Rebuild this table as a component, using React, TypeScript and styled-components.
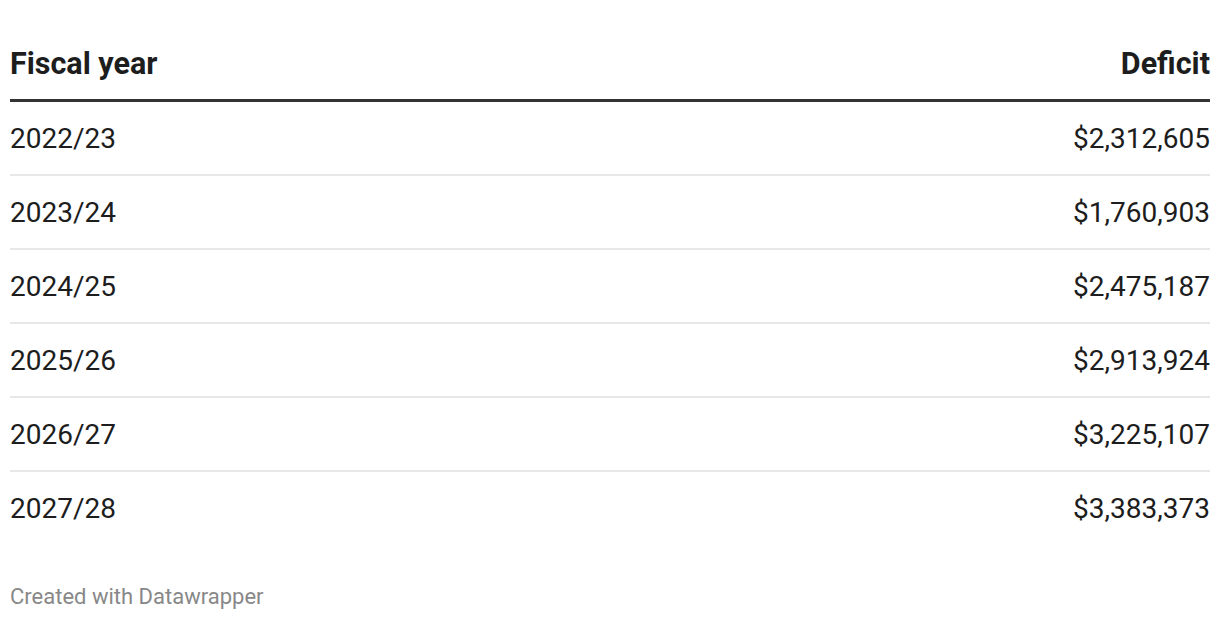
import React from "react";
import styled, { createGlobalStyle } from "styled-components";

const Global = createGlobalStyle`
  html, body { margin: 0; padding: 0; background: #ffffff; }
  body { font-family: Roboto, "Liberation Sans", Arial, sans-serif; color: #1d1d1d; }
`;

const Page = styled.div`
  padding: 0 10px;
`;

const Table = styled.div`
  display: flex;
  flex-direction: column;
`;

const HeaderRow = styled.div`
  display: flex;
  justify-content: space-between;
  align-items: center;
  margin-top: 41px;
  height: 46px;
  padding-bottom: 12px;
  border-bottom: 3px solid #333333;
`;

const HeaderCell = styled.div`
  font-size: 30.5px;
  font-weight: 700;
  line-height: 46px;
  color: #1d1d1d;
`;

const Row = styled.div<{ $last?: boolean }>`
  display: flex;
  justify-content: space-between;
  align-items: center;
  height: 71px;
  padding-top: 1px;
  border-bottom: ${(p) => (p.$last ? "none" : "2px solid #e8e8e8")};
`;

const Cell = styled.div`
  font-size: 28px;
  line-height: 36px;
  color: #1d1d1d;
`;

const Footer = styled.div`
  margin-top: 41px;
  font-size: 22px;
  line-height: 24px;
  color: #888888;
`;

const data: [string, string][] = [
  ["2022/23", "$2,312,605"],
  ["2023/24", "$1,760,903"],
  ["2024/25", "$2,475,187"],
  ["2025/26", "$2,913,924"],
  ["2026/27", "$3,225,107"],
  ["2027/28", "$3,383,373"],
];

export default function App() {
  return (
    <Page>
      <Global />
      <Table>
        <HeaderRow>
          <HeaderCell>Fiscal year</HeaderCell>
          <HeaderCell>Deficit</HeaderCell>
        </HeaderRow>
        {data.map(([y, v], i) => (
          <Row key={y} $last={i === data.length - 1}>
            <Cell>{y}</Cell>
            <Cell>{v}</Cell>
          </Row>
        ))}
      </Table>
      <Footer>Created with Datawrapper</Footer>
    </Page>
  );
}
